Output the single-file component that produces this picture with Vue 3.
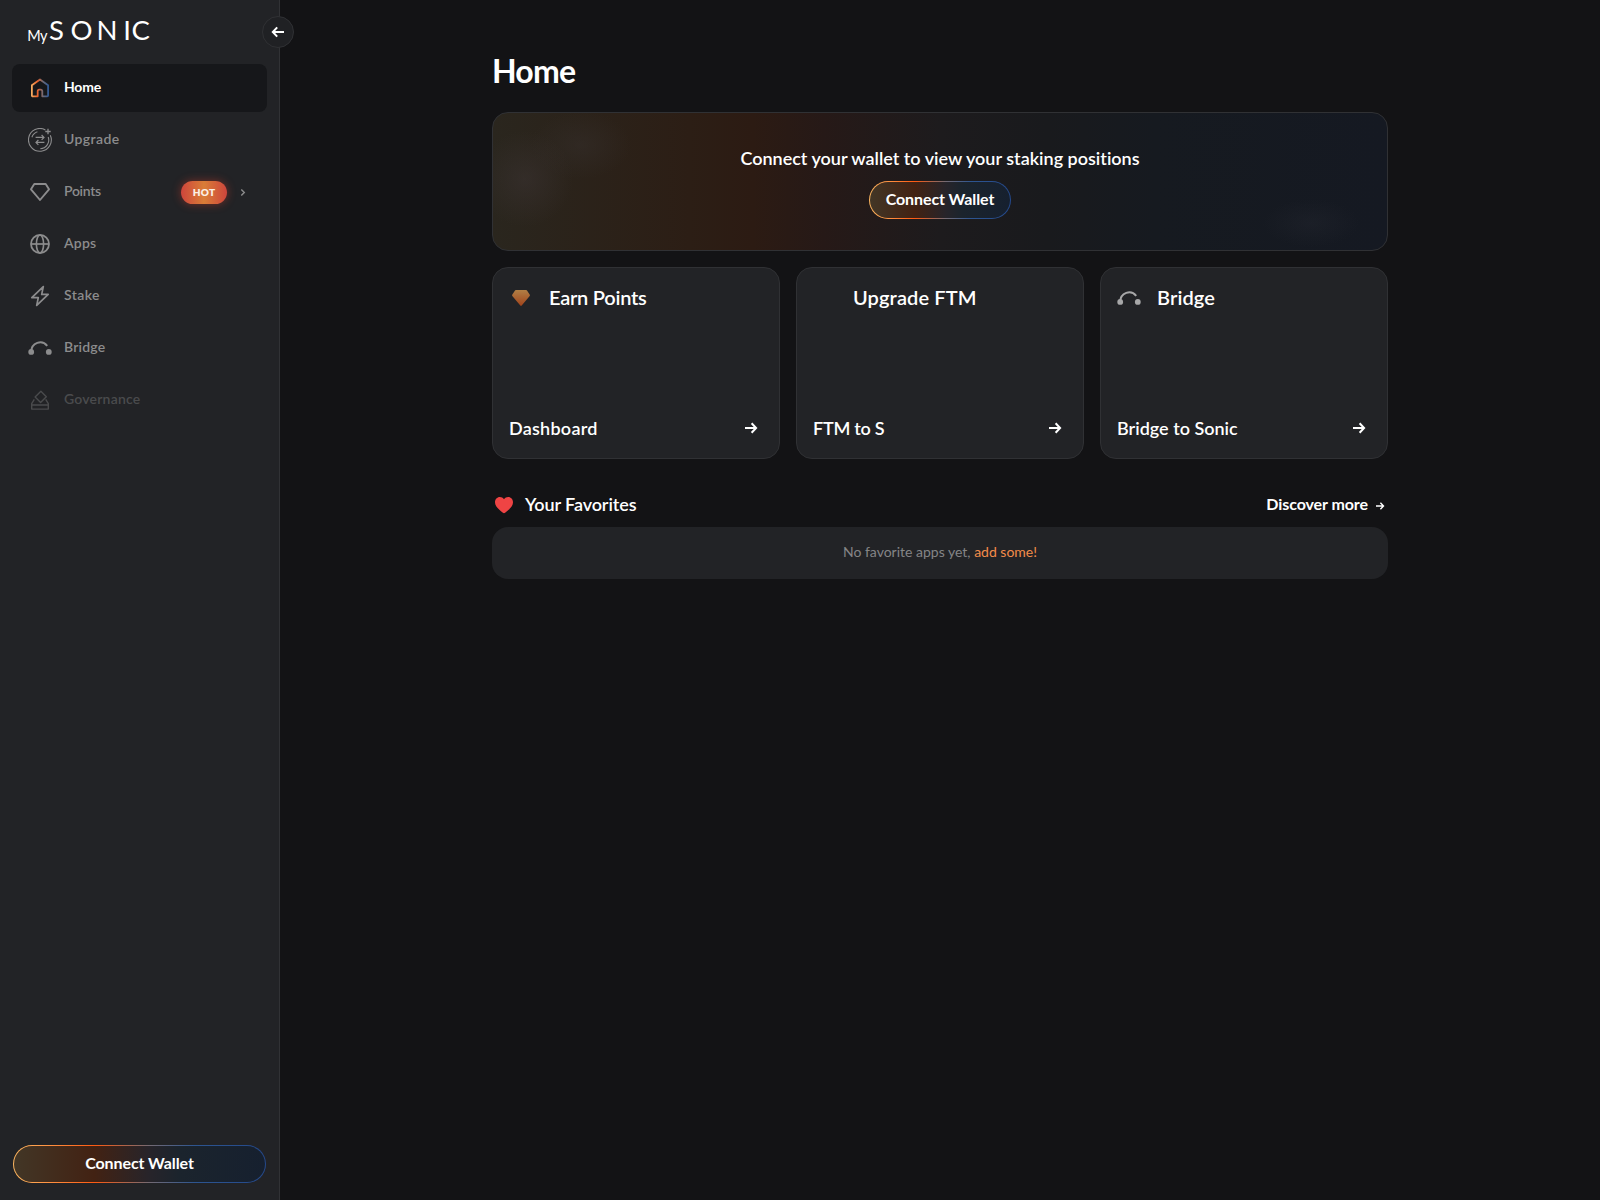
<template>
  <div class="layout">
    <aside class="sidebar">
      <div class="logo">
        <svg width="150" height="36" viewBox="0 0 150 36">
          <text class="logo-my" x="-0.8 12" y="26.6">My</text>
          <text class="logo-name" x="21 42.6 68.4 95.2 103.4" y="26.4">SONIC</text>
        </svg>
      </div>
      <button class="toggle" aria-label="Collapse sidebar">
        <svg width="14" height="14" viewBox="0 0 14 14" fill="none" stroke="currentColor" stroke-width="2">
          <path d="M13 7H2M6.2 2.4L1.8 7L6.2 11.6" />
        </svg>
      </button>

      <nav class="nav">
        <a
          v-for="item in navItems"
          :key="item.id"
          class="nav-item"
          :class="['nav-' + item.id, { active: item.id === current, disabled: item.disabled }]"
          @click="select(item)"
        >
          <svg class="nav-icon" width="24" height="24" viewBox="0 0 24 24" fill="none" stroke="currentColor">
            <template v-if="item.id === 'home'">
              <defs>
                <linearGradient id="homeStroke" gradientUnits="userSpaceOnUse" x1="3" y1="12" x2="21" y2="12">
                  <stop offset="0" stop-color="#f5b265" />
                  <stop offset="0.36" stop-color="#e9622b" />
                  <stop offset="0.66" stop-color="#6f6a76" />
                  <stop offset="1" stop-color="#2b5796" />
                </linearGradient>
              </defs>
              <path
                stroke="url(#homeStroke)"
                stroke-width="1.8"
                stroke-linejoin="round"
                d="M3.9 9.3L12 3.4L20.1 9.3V19.4A0.9 0.9 0 0 1 19.2 20.3H14.3V15.3A1.6 1.6 0 0 0 12.7 13.7H11.3A1.6 1.6 0 0 0 9.7 15.3V20.3H4.8A0.9 0.9 0 0 1 3.9 19.4Z"
              />
            </template>
            <template v-else-if="item.id === 'upgrade'">
              <path stroke-width="1.1" d="M17.4 1.9A11.4 11.4 0 1 0 22.3 7.2" />
              <path stroke-width="1.1" d="M3.9 9.2A8.6 8.6 0 0 1 9.4 3.8M20.2 9A8.7 8.7 0 0 1 12.3 20.7" />
              <path stroke-width="1.3" d="M20 0.8V6.2M17.3 3.5H22.7" />
              <path stroke-width="1.2" d="M7.6 9.4H16M13.6 7L16 9.4L13.6 11.8M16.4 14.4H8M10.4 12L8 14.4L10.4 16.8" />
            </template>
            <path v-else-if="item.id === 'points'" stroke-width="1.9" stroke-linejoin="round" d="M6.3 4H17.7L21 9.3L12 20L3 9.3Z" />
            <template v-else-if="item.id === 'apps'">
              <circle cx="12" cy="12" r="9" stroke-width="1.8" />
              <ellipse cx="12" cy="12" rx="3.6" ry="9" stroke-width="1.6" />
              <path stroke-width="1.7" d="M3 12H21" />
            </template>
            <path v-else-if="item.id === 'stake'" stroke-width="1.7" stroke-linejoin="round" d="M15.3 2.6L3.8 13.6H10.3L8.7 21.4L20.2 10.4H13.7Z" />
            <template v-else-if="item.id === 'bridge'">
              <path stroke-width="2" d="M3.2 15.8A9 9.6 0 0 1 19.2 9.9" />
              <circle cx="3.2" cy="15.9" r="2.9" fill="currentColor" stroke="none" />
              <circle cx="20.8" cy="15.9" r="2.9" fill="currentColor" stroke="none" />
            </template>
            <template v-else>
              <path stroke-width="1.4" stroke-linejoin="round" d="M12.9 3.3L18.3 8.7L12.6 14.4L7.1 8.9Z" />
              <path stroke-width="1.4" stroke-linejoin="round" d="M6.3 11.4L3.7 15.6V21.1H20.3V15.6L17.7 11.4M3.7 17H20.3" />
            </template>
          </svg>
          <span class="nav-label">{{ item.label }}</span>
          <template v-if="item.hot">
            <span class="badge">HOT</span>
            <svg class="chevron" width="16" height="16" viewBox="0 0 16 16" fill="none" stroke="currentColor" stroke-width="1.4">
              <path d="M6.3 5.4L9.3 8.4L6.3 11.4" />
            </svg>
          </template>
        </a>
      </nav>

      <button class="wallet-btn wallet-btn-side"><span>Connect Wallet</span></button>
    </aside>

    <main class="main">
      <div class="content">
        <h1 class="title">Home</h1>

        <section class="banner">
          <p class="banner-text">Connect your wallet to view your staking positions</p>
          <button class="wallet-btn"><span>Connect Wallet</span></button>
        </section>

        <section class="cards">
          <a v-for="card in cards" :key="card.id" class="card" :class="'card-' + card.id">
            <div class="card-head">
              <svg class="card-icon" width="24" height="24" viewBox="0 0 24 24" fill="none">
                <template v-if="card.id === 'earn'">
                  <defs>
                    <linearGradient id="gemFill" x1="0" y1="0" x2="0" y2="1">
                      <stop offset="0" stop-color="#b17f45" />
                      <stop offset="1" stop-color="#a0431b" />
                    </linearGradient>
                  </defs>
                  <path fill="url(#gemFill)" d="M6.9 4H17.1A1 1 0 0 1 18 4.5L20.8 8.8A1 1 0 0 1 20.7 9.9L12.7 19.6A0.9 0.9 0 0 1 11.3 19.6L3.3 9.9A1 1 0 0 1 3.2 8.8L6 4.5A1 1 0 0 1 6.9 4Z" />
                </template>
                <template v-else-if="card.id === 'bridge'">
                  <path stroke="currentColor" stroke-width="2" d="M3.2 15.8A9 9.6 0 0 1 19.2 9.9" />
                  <circle cx="3.2" cy="15.9" r="2.9" fill="currentColor" />
                  <circle cx="20.8" cy="15.9" r="2.9" fill="currentColor" />
                </template>
              </svg>
              <span class="card-title">{{ card.title }}</span>
            </div>
            <div class="card-foot">
              <span class="card-action">{{ card.action }}</span>
              <svg width="24" height="24" viewBox="0 0 24 24" fill="none" stroke="currentColor" stroke-width="2">
                <path d="M6 12H17M12.6 7.3L17.1 12L12.6 16.7" />
              </svg>
            </div>
          </a>
        </section>

        <section class="favorites">
          <div class="fav-head">
            <svg width="24" height="24" viewBox="0 0 24 24" fill="#ef4444">
              <path d="M12 20.2C11.6 20.2 11.2 20.1 10.9 19.8C6 15.8 3 13.2 3 9.3C3 6.4 5.1 4.1 7.8 4.1C9.5 4.1 11 4.9 12 6.3C13 4.9 14.5 4.1 16.2 4.1C18.9 4.1 21 6.4 21 9.3C21 13.2 18 15.8 13.1 19.8C12.8 20.1 12.4 20.2 12 20.2Z" />
            </svg>
            <span class="fav-title">Your Favorites</span>
            <a class="discover">
              <span>Discover more</span>
              <svg width="16" height="16" viewBox="0 0 16 16" fill="none" stroke="currentColor" stroke-width="1.4">
                <path d="M4 8H11.4M8.4 4.8L11.5 8L8.4 11.2" />
              </svg>
            </a>
          </div>
          <div class="fav-empty">
            <p>No favorite apps yet, <a class="fav-link">add some!</a></p>
          </div>
        </section>
      </div>
    </main>
  </div>
</template>

<script setup>
import { ref } from 'vue'

const current = ref('home')

const navItems = [
  { id: 'home', label: 'Home' },
  { id: 'upgrade', label: 'Upgrade' },
  { id: 'points', label: 'Points', hot: true },
  { id: 'apps', label: 'Apps' },
  { id: 'stake', label: 'Stake' },
  { id: 'bridge', label: 'Bridge' },
  { id: 'governance', label: 'Governance', disabled: true }
]

const cards = [
  { id: 'earn', title: 'Earn Points', action: 'Dashboard' },
  { id: 'upgrade', title: 'Upgrade FTM', action: 'FTM to S' },
  { id: 'bridge', title: 'Bridge', action: 'Bridge to Sonic' }
]

const select = (item) => {
  if (!item.disabled) current.value = item.id
}
</script>

<style>
body {
  margin: 0;
  background: #131315;
}
</style>

<style scoped>
.layout {
  display: flex;
  min-height: 100vh;
  background: #131315;
  color: #fff;
  font-family: Lato, "Liberation Sans", sans-serif;
  font-variant-ligatures: none;
}

/* ====== Sidebar ====== */
.sidebar {
  position: relative;
  box-sizing: border-box;
  width: 280px;
  flex-shrink: 0;
  display: flex;
  flex-direction: column;
  background: #222326;
  border-right: 1px solid #313235;
}

.logo {
  height: 50px;
  padding: 14px 0 0 28px;
}
.logo svg {
  display: block;
  fill: #fff;
  overflow: visible;
}
.logo-my {
  font-size: 14.5px;
  font-weight: 400;
}
.logo-name {
  font-size: 27.5px;
  font-weight: 400;
}

.toggle {
  position: absolute;
  top: 16px;
  right: -15px;
  width: 32px;
  height: 32px;
  padding: 0;
  display: flex;
  align-items: center;
  justify-content: center;
  border: 1px solid #303134;
  border-radius: 50%;
  background: #202124;
  color: #fff;
  cursor: pointer;
}

.nav {
  display: flex;
  flex-direction: column;
  gap: 4px;
  padding: 0 12px;
}
.nav-item {
  display: flex;
  align-items: center;
  height: 48px;
  padding: 0 16px;
  box-sizing: border-box;
  border-radius: 8px;
  color: #8c8c8d;
  cursor: pointer;
}
.nav-item.active {
  background: #16171a;
}
.nav-item.disabled {
  color: #4a4b4d;
  cursor: default;
}
.nav-icon {
  flex-shrink: 0;
}
.nav-label {
  margin-left: 12px;
  padding-bottom: 2px;
  font-size: 14px;
  font-weight: 600;
  line-height: 20px;
  letter-spacing: 0.2px;
}
.nav-upgrade .nav-label,
.nav-stake .nav-label {
  letter-spacing: 0.4px;
}
.nav-points .nav-label {
  letter-spacing: -0.3px;
}
.active .nav-label {
  color: #fff;
  font-weight: 700;
  letter-spacing: -0.2px;
}

.badge {
  width: 46px;
  height: 23px;
  margin: 1px 8px 0 auto;
  border-radius: 12px;
  background: linear-gradient(90deg, #ce453c, #d97d37 50%, #ce453c);
  box-shadow: 0 0 10px rgba(226, 64, 45, 0.45);
  color: #fbeee4;
  font-size: 10px;
  font-weight: 800;
  line-height: 23px;
  letter-spacing: 0.2px;
  text-align: center;
}

/* ====== Wallet button ====== */
.wallet-btn {
  height: 38px;
  box-sizing: border-box;
  padding: 0 16px 3px;
  border: 1px solid transparent;
  border-radius: 19px;
  background:
    linear-gradient(90deg, #423626 0%, #422213 32%, #27242a 54%, #1b242d 66%, #16202f 100%) padding-box,
    linear-gradient(90deg, #ffb861 0%, #ff9242 14%, #fe5a12 32%, #736a73 54%, #2d5590 72%, #24498c 100%) border-box;
  color: #fff;
  font-family: inherit;
  font-size: 16px;
  font-weight: 700;
  letter-spacing: -0.1px;
  cursor: pointer;
}
.wallet-btn-side {
  margin: auto 13px 17px;
}

/* ====== Main ====== */
.main {
  flex: 1;
  display: flex;
  justify-content: center;
  padding-top: 49px;
}
.content {
  width: 896px;
}
.title {
  margin: 0 0 19px;
  font-size: 32px;
  font-weight: 700;
  line-height: 44px;
  letter-spacing: -0.8px;
}

.banner {
  display: flex;
  flex-direction: column;
  align-items: center;
  gap: 12px;
  height: 139px;
  box-sizing: border-box;
  padding-top: 34px;
  border: 1px solid #303134;
  border-radius: 16px;
  background:
    radial-gradient(ellipse 48px 48px at 32px 66px, rgba(60, 52, 52, 0.5), transparent),
    radial-gradient(ellipse 50px 34px at 88px 32px, rgba(56, 50, 48, 0.4), transparent),
    radial-gradient(ellipse 48px 24px at 818px 110px, rgba(38, 41, 50, 0.35), transparent),
    linear-gradient(90deg, #2a261e 0%, #2c1e15 22%, #2c1b13 29%, #261917 37%, #1d1b1d 50%, #191a1d 62%, #161a20 74%, #151922 100%);
}
.banner-text {
  margin: 0;
  font-size: 18px;
  font-weight: 600;
  line-height: 22px;
  letter-spacing: 0;
}

/* ====== Cards ====== */
.cards {
  display: grid;
  grid-template-columns: repeat(3, 1fr);
  gap: 16px;
  margin-top: 16px;
}
.card {
  display: flex;
  flex-direction: column;
  justify-content: space-between;
  height: 192px;
  box-sizing: border-box;
  padding: 16px;
  border: 1px solid #303134;
  border-radius: 16px;
  background: #222326;
  cursor: pointer;
}
.card-head {
  display: flex;
  align-items: center;
  gap: 16px;
  height: 28px;
}
.card-icon {
  color: #a7a7a8;
}
.card-title {
  padding-bottom: 2px;
  font-size: 20px;
  font-weight: 600;
  line-height: 26px;
  letter-spacing: 0.1px;
}
.card-foot {
  display: flex;
  align-items: center;
  justify-content: space-between;
  height: 28px;
}
.card-action {
  padding-bottom: 1px;
  font-size: 18px;
  font-weight: 600;
  line-height: 24px;
}
.card-earn .card-title,
.card-upgrade .card-action {
  letter-spacing: -0.25px;
}
.card-earn .card-action {
  letter-spacing: 0.25px;
}

/* ====== Favorites ====== */
.favorites {
  margin-top: 32px;
}
.fav-head {
  display: flex;
  align-items: center;
  height: 28px;
}
.fav-title {
  margin-left: 9px;
  padding-bottom: 2px;
  font-size: 18px;
  font-weight: 600;
  line-height: 24px;
  letter-spacing: -0.1px;
}
.discover {
  display: flex;
  align-items: center;
  gap: 4px;
  margin-left: auto;
  font-size: 16px;
  font-weight: 700;
  line-height: 22px;
  letter-spacing: -0.08px;
  cursor: pointer;
}
.discover span {
  padding-bottom: 2px;
}
.discover svg {
  margin-top: 2px;
}
.fav-empty {
  display: flex;
  align-items: center;
  justify-content: center;
  height: 52px;
  margin-top: 8px;
  border-radius: 16px;
  background: #222326;
}
.fav-empty p {
  margin: 0;
  padding-bottom: 2px;
  color: #858586;
  font-size: 14px;
  font-weight: 400;
  line-height: 20px;
}
.fav-link {
  color: #f28c4a;
  cursor: pointer;
}
</style>
